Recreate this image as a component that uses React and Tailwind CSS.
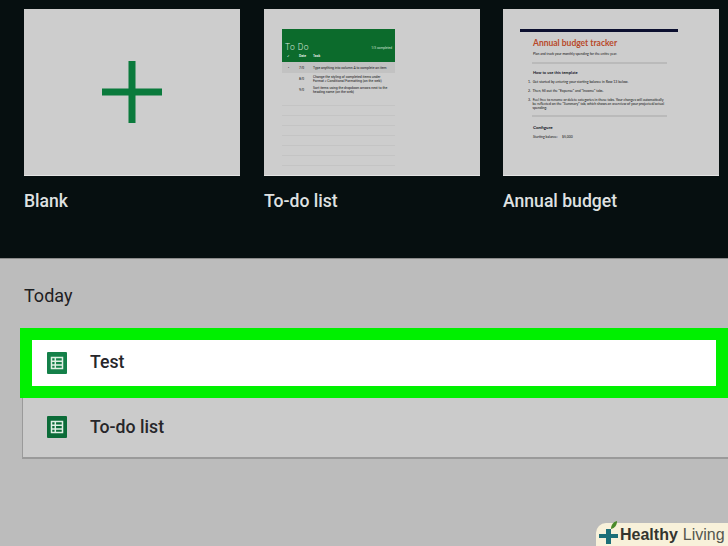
const SANS = 'font-[Roboto,"Liberation_Sans",sans-serif]'

function SheetIcon({ color }) {
  return (
    <svg width="20" height="22" viewBox="0 0 20 22" className="shrink-0">
      <rect width="20" height="22" rx="1" fill={color} />
      <path d="M4.5 5.500h11v11h-11z M4.5 9.200h11 M4.5 12.900h11 M8.300 5.500v11" fill="none" stroke="#dff0e4" strokeWidth="1.500" />
    </svg>
  )
}

function Card({ label, children }) {
  return (
    <div className="w-[216px] shrink-0">
      <div className="h-[167px] bg-[#cdcdcd] border-b border-[#e4e4e4] overflow-hidden">{children}</div>
      <div className="mt-[13px] text-[17.6px] leading-[24px] font-medium text-[#dfe1e1]">{label}</div>
    </div>
  )
}

function TodoThumb() {
  const tasks = [
    ['7/0', 'Type anything into column A to complete an item', 'bg-[#c2c2c2] h-[11px]', '•'],
    ['8/0', 'Change the styling of completed items under\nFormat > Conditional Formatting (on the web)', 'h-[10px] mt-[1px]', ''],
    ['9/0', 'Sort items using the dropdown arrows next to the\nheading name (on the web)', 'h-[10px] mt-[1px]', ''],
  ]
  return (
    <div className="pt-[20px] px-[18px]">
      <div className="w-[113px] bg-[#0c6b2c] text-[#d7e6da]">
        <div className="h-[23px] flex items-end justify-between pl-[3px] pr-[3px]">
          <span className="text-[8.5px] leading-[10px] tracking-[0.4px] font-light">To Do</span>
          <span className="text-[3.2px] leading-[7px]">1/3 completed</span>
        </div>
        <div className="h-[10px] flex items-center text-[3.4px] font-medium text-white">
          <span className="w-[17px] pl-[5px] font-bold">✓</span>
          <span className="w-[14px]">Date</span>
          <span>Task</span>
        </div>
      </div>
      <div className="w-[113px] text-[3.4px] leading-[4px] text-[#111111]">
        {tasks.map(([date, text, cls, mark]) => (
          <div key={date} className={`flex items-center ${cls}`}>
            <span className="w-[17px] shrink-0 pl-[6px]">{mark}</span>
            <span className="w-[14px] shrink-0">{date}</span>
            <span className="whitespace-pre">{text}</span>
          </div>
        ))}
        <div className="mt-[1px]">
          {Array.from({ length: 9 }).map((_, i) => (
            <div key={i} className="h-[10px] border-b border-[#c4c4c4]" />
          ))}
        </div>
      </div>
    </div>
  )
}

function BudgetThumb() {
  return (
    <div className="pt-[20px] pl-[17px] font-[Lato,'Liberation_Sans',sans-serif]">
      <div className="w-[158px] h-[3px] bg-[#0c1030]" />
      <div className="pl-[13px] pt-[5px] w-[160px]">
        <div className="text-[8.5px] leading-[12px] font-bold text-[#b8492a] whitespace-nowrap">Annual budget tracker</div>
        <div className="text-[3.4px] leading-[5px] mt-[3px] text-[#111111] whitespace-nowrap">Plan and track your monthly spending for the entire year.</div>
      </div>
      <div className="ml-[12px] w-[135px] h-[2px] bg-[#bababa] mt-[5px]" />
      <div className="pl-[13px] text-[3.5px] leading-[4px] text-[#111111]">
        <div className="font-bold text-[4px] mt-[7px] text-[#10141f]">How to use this template</div>
        <div className="mt-[5px] -ml-[5px] whitespace-nowrap">1. &nbsp;Get started by entering your starting balance in Row 13 below.</div>
        <div className="mt-[5px] -ml-[5px] whitespace-nowrap">2. &nbsp;Then, fill out the "Expense" and "Income" tabs.</div>
        <div className="mt-[5px] -ml-[5px] whitespace-pre">{'3. \u00a0Feel free to rename or delete categories in these tabs. Your changes will automatically\n     be reflected on the "Summary" tab, which shows an overview of your projected/actual\n     spending.'}</div>
      </div>
      <div className="ml-[12px] w-[135px] h-[2px] bg-[#bababa] mt-[5px]" />
      <div className="pl-[13px] text-[#111111]">
        <div className="font-bold text-[4.5px] leading-[5px] mt-[8px] text-[#10141f]">Configure</div>
        <div className="text-[3.4px] leading-[4px] mt-[5px] whitespace-pre">{'Starting balance:     $5,000'}</div>
      </div>
    </div>
  )
}

function FileRow({ name, color, highlighted }) {
  return (
    <div
      className={
        highlighted
          ? 'ml-[20px] h-[70px] border-[12px] border-[#00f000] bg-white flex items-center'
          : 'ml-[22px] h-[61px] bg-[#cbcbcb] border-b-2 border-l border-[#9a9a9a] flex items-center'
      }
    >
      <div className={highlighted ? 'ml-[15px] -mt-[1px]' : 'ml-[24px] -mt-[1px]'}>
        <SheetIcon color={color} />
      </div>
      <span className="ml-[23px] -mt-[1px] text-[17.7px] font-medium text-[#26262a]">{name}</span>
    </div>
  )
}

export default function App() {
  return (
    <div className={`${SANS} relative w-[728px] h-[546px] overflow-hidden bg-[#bcbcbc]`}>
      <div className="h-[259px] bg-[#060f10] border-b border-[#8a8a8a] pt-[9px] pl-[24px] flex gap-[24px]">
        <Card label="Blank">
          <div className="h-full flex items-center justify-center">
            <svg width="60" height="62" viewBox="0 0 60 62">
              <path d="M0 27.500h60v7H0z M26.500 0h7v62h-7z" fill="#0a7a3c" />
            </svg>
          </div>
        </Card>
        <Card label="To-do list">
          <TodoThumb />
        </Card>
        <div className="-ml-px">
          <Card label="Annual budget">
            <BudgetThumb />
          </Card>
        </div>
      </div>

      <div className="pt-[25px] pl-[24px] text-[18px] leading-[24px] text-[#1e2022]">Today</div>

      <div className="mt-[20px]">
        <FileRow name="Test" color="#148049" highlighted />
        <FileRow name="To-do list" color="#0b6b38" />
      </div>

      <div className="absolute right-0 bottom-0 w-[132px] h-[23px] bg-[#f8f1da] rounded-tl-[10px] flex items-center pl-[2px] font-['Liberation_Sans',sans-serif]">
        <svg width="22" height="24" viewBox="0 0 22 24" className="shrink-0 -mt-[5px]">
          <path d="M8 9h5v5h7v4h-7v6H8v-6H1v-4h7z" fill="#1d6f78" />
          <path d="M13 9c0-4 2-7 6-8 0 4-2 7-6 8z" fill="#4a8a2a" />
        </svg>
        <span className="text-[16px] font-bold text-[#33352f] leading-[20px]">Healthy</span>
        <span className="ml-[5px] text-[16px] text-[#55574f] leading-[20px]">Living</span>
      </div>
    </div>
  )
}
